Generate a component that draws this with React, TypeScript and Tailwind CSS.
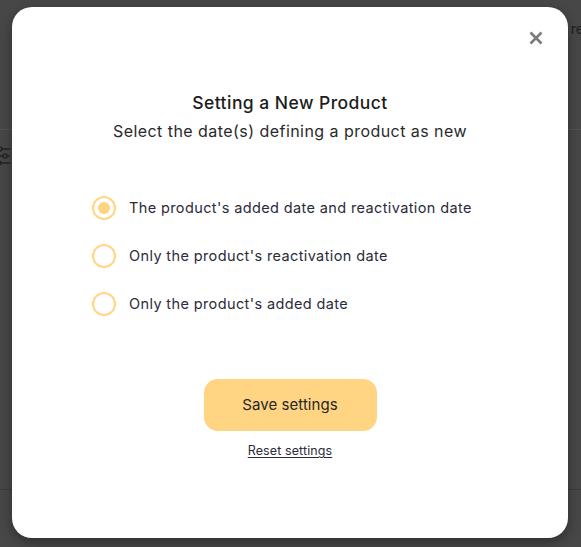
import React, { useState } from 'react';

const options = [
  { id: 'both', label: "The product's added date and reactivation date" },
  { id: 'reactivation', label: "Only the product's reactivation date" },
  { id: 'added', label: "Only the product's added date" },
];

const NewProductModal = () => {
  const [selected, setSelected] = useState('both');

  return (
    <div className="absolute left-[12px] top-[7px] w-[556px] h-[531px] bg-white rounded-[20px] shadow-[0_4px_12px_rgba(0,0,0,0.35)] flex flex-col items-center">
      <button className="absolute right-[25px] top-[24px] w-[14px] h-[14px] flex items-center justify-center text-[#7a7a7a]">
        <svg viewBox="0 0 14 14" width="14" height="14" fill="none" stroke="currentColor" strokeWidth="2.6" strokeLinecap="butt">
          <path d="M1.5 1.5l11 11M12.5 1.5l-11 11" />
        </svg>
      </button>

      <div className="mt-[84px] text-[17.5px] leading-[24px] font-medium text-[#1c1c1c] tracking-[0.45px]">
        Setting a New Product
      </div>
      <div className="mt-[4px] text-[16px] leading-[24px] text-[#2a2a2a] tracking-[0.45px]">
        Select the date(s) defining a product as new
      </div>

      <div className="self-start ml-[80px] mt-[53px] flex flex-col gap-[24px]">
        {options.map((option) => (
          <label key={option.id} className="flex items-center h-[24px] cursor-pointer">
            <input
              type="radio"
              name="new-product"
              value={option.id}
              checked={selected === option.id}
              onChange={() => setSelected(option.id)}
              className="sr-only"
            />
            <span className="w-[24px] h-[24px] rounded-full border-[2.5px] border-[#ffd586] flex items-center justify-center">
              {selected === option.id && <span className="w-[12px] h-[12px] rounded-full bg-[#ffd37f]" />}
            </span>
            <span className="ml-[13px] text-[14.5px] text-[#2b2b3a] tracking-[0.38px]">{option.label}</span>
          </label>
        ))}
      </div>

      <button className="mt-[63px] w-[173px] h-[52px] rounded-[14px] bg-[#ffd583] text-[15px] text-[#262626] tracking-[0.05px]">
        Save settings
      </button>
      <button className="mt-[11px] text-[12.5px] leading-[18px] text-[#2b2b3a] tracking-[0.1px] underline underline-offset-[2px]">
        Reset settings
      </button>
    </div>
  );
};

export default function App() {
  return (
    <div
      className="relative w-[581px] h-[547px] overflow-hidden bg-[#474747]"
      style={{ fontFamily: 'Inter, "Noto Sans", sans-serif' }}
    >
      {/* page behind the backdrop */}
      <div className="flex flex-col h-full">
        <div className="h-[130px] border-b border-[#535353] flex justify-end">
          <span className="mt-[18px] mr-[-3px] text-[14px] text-[#1e1e1e]">re</span>
        </div>
        <div className="pt-[16px] h-[360px] border-b border-[#3c3c3c]">
          <svg width="14" height="20" viewBox="0 0 14 20" fill="none" stroke="#222" strokeWidth="1.4" className="-ml-[4px]">
            <path d="M0 3h14M0 10h14M0 17h14" />
            <circle cx="4" cy="3" r="2" fill="#474747" />
            <circle cx="9" cy="10" r="2" fill="#474747" />
            <circle cx="3" cy="17" r="2" fill="#474747" />
          </svg>
        </div>
      </div>

      <NewProductModal />
    </div>
  );
}
